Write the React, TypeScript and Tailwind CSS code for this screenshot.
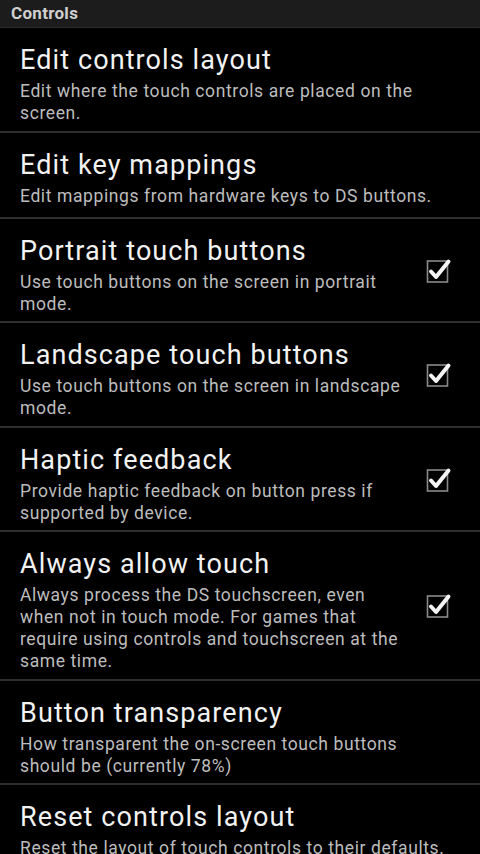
import React from "react";

type Item = { title: string; summary: string; checked?: boolean; minH?: boolean };

const items: Item[] = [
  { title: "Edit controls layout", summary: "Edit where the touch controls are placed on the screen." },
  { title: "Edit key mappings", summary: "Edit mappings from hardware keys to DS buttons.", minH: true },
  { title: "Portrait touch buttons", summary: "Use touch buttons on the screen in portrait mode.", checked: true },
  { title: "Landscape touch buttons", summary: "Use touch buttons on the screen in landscape mode.", checked: true },
  { title: "Haptic feedback", summary: "Provide haptic feedback on button press if supported by device.", checked: true },
  {
    title: "Always allow touch",
    summary:
      "Always process the DS touchscreen, even when not in touch mode. For games that require using controls and touchscreen at the same time.",
    checked: true,
  },
  { title: "Button transparency", summary: "How transparent the on-screen touch buttons should be (currently 78%)" },
  { title: "Reset controls layout", summary: "Reset the layout of touch controls to their defaults." },
];

function CheckBox() {
  return (
    <svg width="28" height="28" viewBox="0 0 28 28" className="block">
      <rect x="3.5" y="5" width="20" height="21" fill="none" stroke="#8a8a8a" strokeWidth="1.6" />
      <path d="M7 15.5 L12 21 L24.5 5.5" fill="none" stroke="#f4f4f4" strokeWidth="4" strokeLinecap="round" strokeLinejoin="round" />
    </svg>
  );
}

export default function App() {
  return (
    <div className="w-[480px] h-[854px] overflow-hidden bg-black" style={{ fontFamily: "Roboto, 'Noto Sans', sans-serif" }}>
      <div className="h-[28px] bg-[#1c1c1c] border-b border-[#2c2c2c] flex items-center pl-[11px]">
        <span className="text-[17px] font-bold text-[#d0d0d0] leading-none tracking-[0.3px]">Controls</span>
      </div>
      {items.map((it) => (
        <div key={it.title} className="border-b-2 border-[#2e2e2e]">
          <div className={`flex items-center pl-[20px] ${it.checked ? "pr-[28px]" : "pr-[32px]"} ${it.minH ? "min-h-[84px] items-start" : ""}`}>
            <div className={`flex-1 pt-[14px] pb-[6.5px] ${it.checked ? "pr-[16px]" : ""}`}>
              <div className="text-[27px] leading-[36px] tracking-[1.1px] text-[#f2f2f2]">{it.title}</div>
              <div className="mt-[2px] text-[17.5px] leading-[22px] tracking-[0.6px] text-[#bdbdbd]">{it.summary}</div>
            </div>
            {it.checked && (
              <div className="shrink-0">
                <CheckBox />
              </div>
            )}
          </div>
        </div>
      ))}
    </div>
  );
}
